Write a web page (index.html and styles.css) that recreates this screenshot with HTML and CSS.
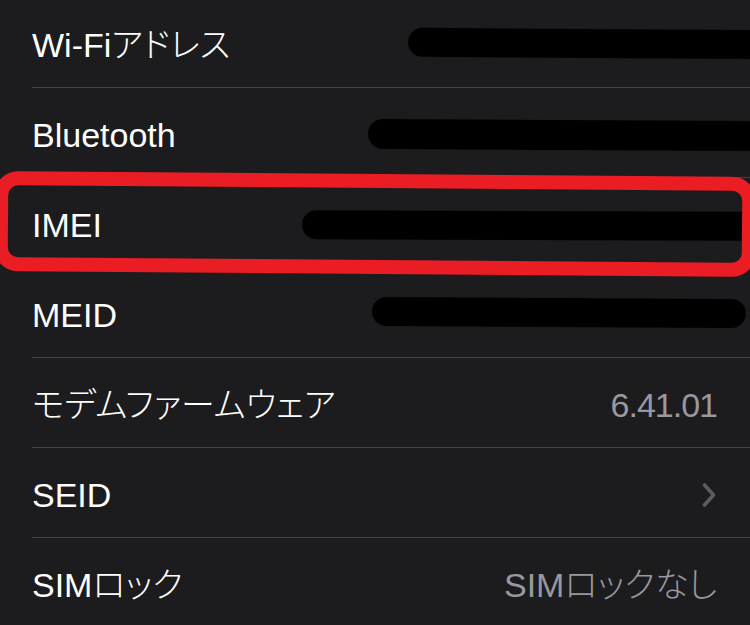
FILE: index.html
```html
<!DOCTYPE html>
<html lang="ja">
<head>
<meta charset="utf-8">
<title>情報</title>
<link rel="stylesheet" href="styles.css">
</head>
<body>
<div class="list">
  <div class="row">
    <span class="label">Wi-Fiアドレス</span>
    <span class="redact redact-wifi"></span>
  </div>
  <div class="row">
    <span class="label">Bluetooth</span>
    <span class="redact redact-bt"></span>
  </div>
  <div class="row">
    <span class="label">IMEI</span>
    <span class="redact redact-imei"></span>
  </div>
  <div class="row">
    <span class="label">MEID</span>
    <span class="redact redact-meid"></span>
  </div>
  <div class="row">
    <span class="label">モデムファームウェア</span>
    <span class="value value-num">6.41.01</span>
  </div>
  <div class="row">
    <span class="label">SEID</span>
    <svg class="chevron" width="14" height="26" viewBox="0 0 14 26" aria-hidden="true">
      <path d="M2.5 3 L11.5 13 L2.5 23" fill="none" stroke="#5c5c60" stroke-width="3.6" stroke-linecap="round" stroke-linejoin="round"/>
    </svg>
  </div>
  <div class="row">
    <span class="label">SIMロック</span>
    <span class="value">SIMロックなし</span>
  </div>
  <div class="highlight"></div>
</div>
</body>
</html>
```

FILE: styles.css
```css
html, body {
  margin: 0;
  padding: 0;
  background: #1c1c1e;
}

body {
  width: 750px;
  height: 625px;
  overflow: hidden;
  font-family: "Liberation Sans", "Noto Sans CJK JP", sans-serif;
  font-size: 34px;
  font-weight: 300;
  color: #ffffff;
  font-feature-settings: "palt";
}

.list {
  position: relative;
  margin-top: -2px;
}

.row {
  position: relative;
  box-sizing: border-box;
  height: 90px;
  margin-left: 32px;
  padding: 5px 33px 0 0;
  display: flex;
  align-items: center;
  justify-content: space-between;
  border-bottom: 1px solid #434346;
  line-height: 40px;
}

.label {
  white-space: nowrap;
}

.value {
  color: #98989e;
  white-space: nowrap;
}

.value-num {
  letter-spacing: -1px;
}

.chevron {
  display: block;
  margin-right: 1px;
}

.redact {
  position: absolute;
  height: 29px;
  background: #000;
  border-radius: 15px;
}

.redact-wifi {
  left: 376px;
  right: -30px;
  top: 31px;
  transform: rotate(0.4deg);
}

.redact-bt {
  left: 336px;
  right: -30px;
  top: 32px;
  height: 30px;
  transform: rotate(0.3deg);
}

.redact-imei {
  left: 270px;
  right: -30px;
  top: 33px;
  transform: rotate(0.2deg);
}

.redact-meid {
  left: 340px;
  right: 4px;
  top: 30px;
  transform: rotate(0.3deg);
}

.highlight {
  position: absolute;
  left: -6px;
  top: 176px;
  width: 734px;
  height: 72px;
  border: 14px solid #ea1d25;
  border-radius: 24px;
  transform: rotate(0.45deg);
  pointer-events: none;
}
```
